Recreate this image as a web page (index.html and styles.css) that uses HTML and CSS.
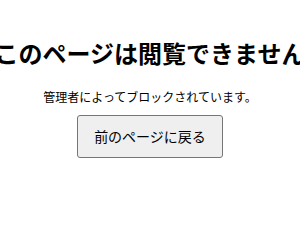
FILE: index.html
```html
<!DOCTYPE html>
<html lang="ja">
<head>
    <meta charset="UTF-8">
    <meta name="viewport" content="width=device-width, initial-scale=1.0">
    <title>アクセスできません</title>
    <link rel="stylesheet" href="styles.css">
</head>
<body>
    <div class="blocked-page">
        <h1 class="blocked-title">このページは閲覧できません</h1>
        <p class="blocked-message">管理者によってブロックされています。</p>
        <button class="back-button" onclick="history.back()">前のページに戻る</button>
    </div>
</body>
</html>
```

FILE: styles.css
```css
body {
    margin: 0;
    padding: 0;
    background-color: white;
    font-family: "Noto Sans CJK JP", "Noto Sans", sans-serif;
    color: black;
}

.blocked-page {
    display: flex;
    flex-direction: column;
    align-items: center;
    padding-top: 35px;
}

.blocked-title {
    margin: 0 0 17px;
    font-size: 24px;
    line-height: 36px;
    font-weight: bold;
    white-space: nowrap;
}

.blocked-message {
    margin: 0 0 9px;
    font-size: 12px;
    line-height: 18px;
}

.back-button {
    font-family: inherit;
    font-size: 14px;
    line-height: 21px;
    padding: 10px 16px;
    background-color: #efefef;
    border: 1px solid #767676;
    border-radius: 3px;
    color: black;
    cursor: pointer;
}
```
